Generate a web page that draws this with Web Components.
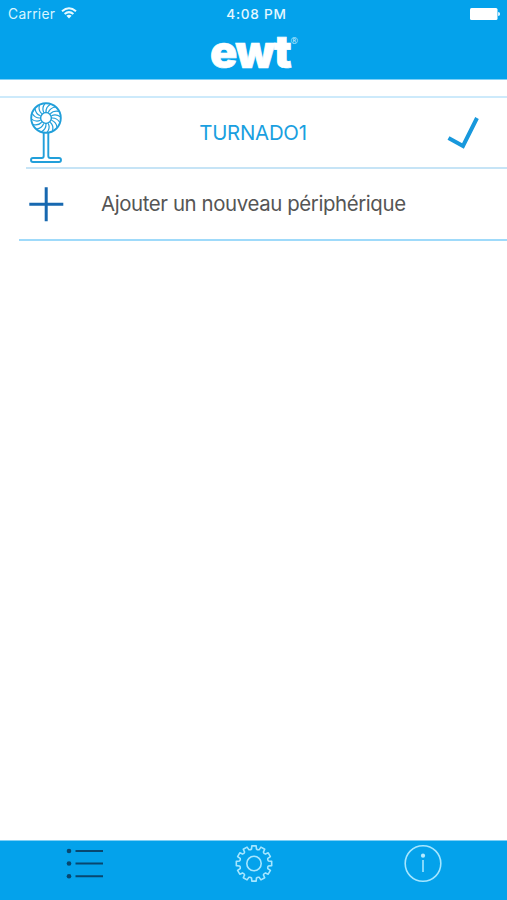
<!DOCTYPE html>
<html lang="fr">
<head>
<meta charset="utf-8">
<title>ewt</title>
<style>
html,body{margin:0;height:100%;background:#fff}
body{font-family:Inter,"Liberation Sans",sans-serif;overflow:hidden}
</style>
</head>
<body>
<device-screen>
  <app-header slot="top" carrier="Carrier" time="4:08 PM"></app-header>
  <device-row><icon-fan slot="lead"></icon-fan>TURNADO1<icon-check slot="trail"></icon-check></device-row>
  <add-row>Ajouter un nouveau périphérique</add-row>
  <tab-bar slot="bottom"><icon-list></icon-list><icon-gear></icon-gear><icon-info></icon-info></tab-bar>
</device-screen>
<script>
const define = (name, markup) => customElements.define(name, class extends HTMLElement {
  constructor() {
    super();
    this.attachShadow({mode: 'open'}).innerHTML = typeof markup === 'function' ? markup(this) : markup;
  }
});
const polar = (cx, cy, r, deg) => {
  const a = deg * Math.PI / 180;
  return (cx + r * Math.cos(a)).toFixed(2) + ' ' + (cy + r * Math.sin(a)).toFixed(2);
};

define('device-screen', `
<style>
:host{display:flex;flex-direction:column;height:900px;width:507px;background:#fff}
main{flex:1;padding-top:16px}
</style>
<slot name="top"></slot><main><slot></slot></main><slot name="bottom"></slot>`);

define('app-header', el => `
<style>
:host{display:block;box-sizing:border-box;height:80px;background:#04a2eb;color:#fff;border-bottom:1px solid #7fd0f6}
.status{display:grid;grid-template-columns:1fr auto 1fr;align-items:center;height:27px;padding:0 7px 0 8px}
.left{display:flex;align-items:center;gap:6px;font-size:13.8px;letter-spacing:.3px;color:#d8f5ff}
.left svg{margin-top:-2px}
.time{font-size:13.6px;font-weight:500;letter-spacing:.75px;color:#e6f8ff;padding-left:5px}
.battery{justify-self:end;display:block}
.logo{display:flex;justify-content:center;height:49px;padding-left:1px}
.word{font:900 45px/49px Inter,sans-serif;letter-spacing:-1.3px;-webkit-text-stroke:.7px #fff}
.reg{font:9px/12px "Open Sans",sans-serif;padding-top:8px;margin-left:0;color:#c5ecff}
</style>
<div class="status">
  <div class="left"><span>${el.getAttribute('carrier')}</span>
    <svg width="16" height="12" viewBox="0 0 16 12" fill="none" stroke="#e6faff" stroke-width="2"><path d="M1 4.3Q8-1.7 15 4.3M3.6 7Q8 3.3 12.4 7"/><path d="M5.4 8.7Q8 6.7 10.6 8.7L8 11.6Z" fill="#e6faff" stroke="none"/></svg>
  </div>
  <div class="time">${el.getAttribute('time')}</div>
  <svg class="battery" width="30" height="12" viewBox="0 0 30 12" fill="#fff"><rect width="27.5" height="12" rx="1.5"/><path d="M28.2 4q1.8 0 1.8 2t-1.8 2z"/></svg>
</div>
<div class="logo"><span class="word">ewt</span><span class="reg">®</span></div>`);

define('device-row', `
<style>
:host{display:grid;grid-template-columns:26px 1fr;height:73px;border-top:2px solid #cdeafb;box-sizing:border-box}
.in{grid-column:2;display:grid;grid-template-columns:40px 1fr 60px;align-items:center;border-bottom:2px solid #c6e4f6;color:#1a9fe0}
.t{text-align:center;font-size:20.4px;letter-spacing:-.25px;padding:0 7px 1px 0}
</style>
<div class="in"><slot name="lead"></slot><span class="t"><slot></slot></span><slot name="trail"></slot></div>`);

define('add-row', `
<style>
:host{display:flex;align-items:center;box-sizing:border-box;height:72px;margin-left:19px;border-bottom:2px solid #9fdafa;color:#555;font-size:20.4px;letter-spacing:-.39px}
svg{margin:0 37px 0 10px;flex:none}
span{padding-bottom:1px}
</style>
<svg width="35" height="35" viewBox="0 0 35 35" stroke="#1768b0" stroke-width="3"><path d="M17.2 .3v34M.3 17.2h34"/></svg><span><slot></slot></span>`);

define('tab-bar', `
<style>
:host{display:grid;grid-template-columns:repeat(3,1fr);justify-items:center;align-items:start;box-sizing:border-box;height:60px;padding-top:3px;background:#04a2eb;border-top:1px solid #7fd0f6}
</style><slot></slot>`);

let blades = '';
for (let i = 0; i < 16; i++) {
  const a = i * 360 / 16;
  blades += `M${polar(17, 17, 6, a)}Q${polar(17, 17, 11, a - 1)} ${polar(17, 17, 14.5, a + 18)}`;
}
define('icon-fan', `
<style>:host{display:block;height:62px;padding:0 0 2px 3px}svg{display:block}</style>
<svg width="34" height="62" viewBox="0 0 34 62" fill="none" stroke="#219fda" stroke-width="1.9">
<circle cx="17" cy="17" r="14.8"/><circle cx="17" cy="17" r="5.4" stroke-width="1.5"/><path d="${blades}" stroke-width="1.2"/>
<path d="M14.7 32v23q0 2-2 2H4q-2 0-2 2t2 2h26q2 0 2-2t-2-2h-8.700q-2 0-2-2V32"/></svg>`);

define('icon-check', `
<style>:host{display:block}svg{display:block}</style>
<svg width="36" height="36" viewBox="0 0 36 36" fill="none" stroke="#1898dc" stroke-width="4"><path d="M1.500 23L16 31L30 3"/></svg>`);

define('icon-list', `
<style>:host{display:block}svg{display:block}</style>
<svg width="38" height="38" viewBox="0 0 38 38" fill="#08476f" stroke="#08476f" stroke-width="2"><path d="M9.500 7H37M9.500 19.500H37M9.500 32.300H37"/><g stroke="none"><circle cx="3" cy="7" r="2.300"/><circle cx="3" cy="19.500" r="2.300"/><circle cx="3" cy="32.300" r="2.300"/></g></svg>`);

let gear = '';
for (let i = 0; i < 12; i++) {
  const a = i * 30 - 90;
  gear += (i ? 'L' : 'M') + polar(19, 19.500, 14.800, a - 9.500) + 'L' + polar(19, 19.500, 17.800, a - 7) +
    'L' + polar(19, 19.500, 17.800, a + 7) + 'L' + polar(19, 19.500, 14.800, a + 9.500) +
    'Q' + polar(19, 19.500, 13.800, a + 15) + ' ' + polar(19, 19.500, 14.800, a + 20.500);
}
define('icon-gear', `
<style>:host{display:block}svg{display:block}</style>
<svg width="38" height="39" viewBox="0 0 38 39" fill="none" stroke="#a5e6ff" stroke-width="1.600" stroke-linejoin="round"><path d="${gear}Z"/><circle cx="19" cy="19.500" r="7.200"/></svg>`);

define('icon-info', `
<style>:host{display:block}svg{display:block}</style>
<svg width="38" height="39" viewBox="0 0 38 39" fill="none" stroke="#a5e6ff" stroke-width="1.600"><circle cx="19" cy="19.500" r="17.800"/><path d="M19 16v12"/><circle cx="19" cy="11.700" r="2.100" fill="#b5ebff" stroke="none"/></svg>`);
</script>
</body>
</html>
